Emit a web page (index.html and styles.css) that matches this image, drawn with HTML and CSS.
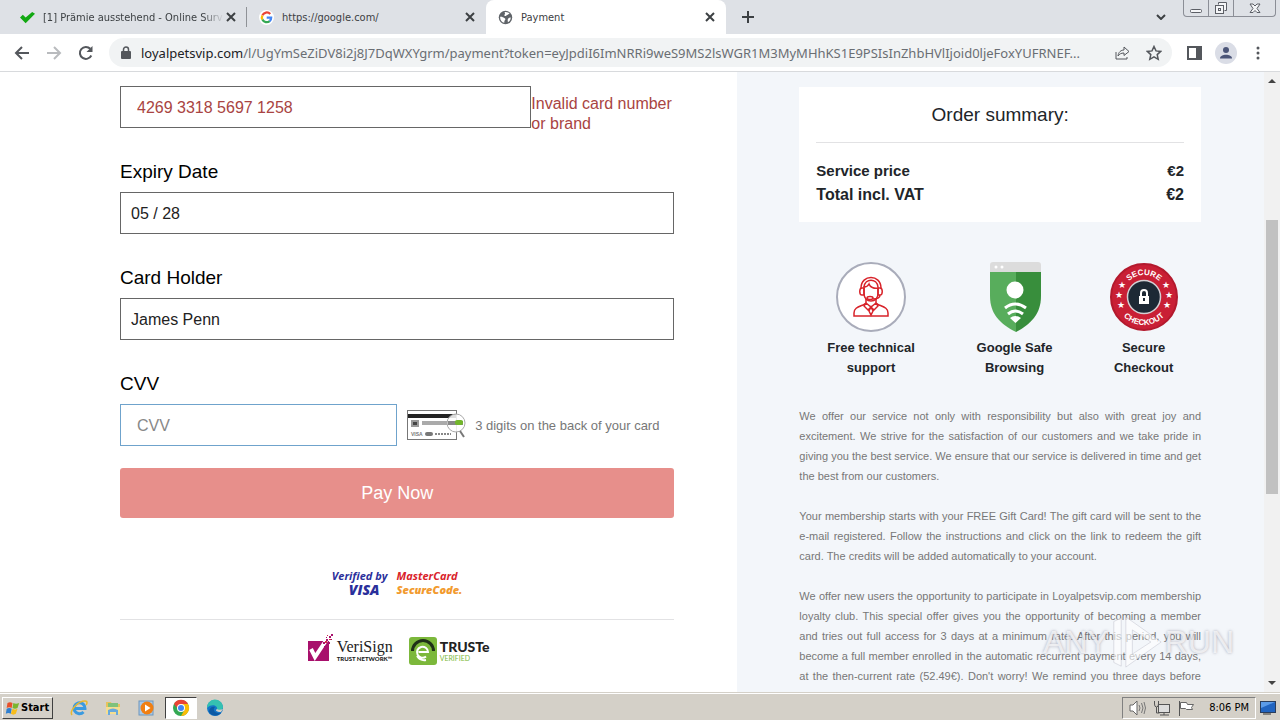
FILE: index.html
```html
<!DOCTYPE html>
<html lang="en">

<head>
    <meta charset="UTF-8">
    <meta name="viewport" content="width=device-width, initial-scale=1.0">
    <title>Payment</title>
    <link rel="stylesheet" href="styles.css">
</head>

<body>
    <!-- Tab strip -->
    <header class="tab-strip">
        <div class="tab first">
            <svg class="favicon" viewBox="0 0 16 16"><path d="M0 8l3-3 3 3 7-6 3 2-10 10z" fill="#12a812"/></svg>
            <span class="tab-title fade">[1] Prämie ausstehend - Online Surv</span>
            <button class="tab-close" aria-label="Close tab"><svg viewBox="0 0 10 10"><path d="M1 1l8 8M9 1L1 9"/></svg></button>
        </div>
        <div class="tab">
            <svg class="favicon" viewBox="0 0 16 16">
                <circle cx="8" cy="8" r="8" fill="#fff"/>
                <g fill="none" stroke-width="2.4">
                    <path d="M12 4.3A5 5 0 0 0 3.6 5.8" stroke="#ea4335"/>
                    <path d="M3.6 5.8a5 5 0 0 0 0 4.4" stroke="#fbbc05"/>
                    <path d="M3.6 10.2a5 5 0 0 0 7.8 1.6" stroke="#34a853"/>
                    <path d="M11.4 11.8A5 5 0 0 0 13 8H8.2" stroke="#4285f4"/>
                </g>
            </svg>
            <span class="tab-title">https://google.com/</span>
            <button class="tab-close" aria-label="Close tab"><svg viewBox="0 0 10 10"><path d="M1 1l8 8M9 1L1 9"/></svg></button>
        </div>
        <div class="tab active">
            <svg class="favicon" viewBox="0 0 16 16">
                <circle cx="8" cy="8" r="7.2" fill="#5f6368"/>
                <path d="M2.3 7.3c2.2-.3 3 .6 4.4 1.2 1.3.4 1.5 1.5.6 2.3-.8.6-.4 1.6-.6 2.8C4 13 2 10.500 2.300 7.300zM7 2.300c2-.6 4.300.2 5.500 1.700-1.400-.1-1.500 1.300-2.800 1.300-1 .2-.9 1.400-2 1.200-1.200-.3-1.300-1.400-.4-2C8 4 7 3 7 2.300zM13.500 8c.3 2.300-1.200 4.400-3 5.100.1-1.200-.4-2-.1-3C10.800 9 12 8 13.500 8z" fill="#fff"/>
            </svg>
            <span class="tab-title">Payment</span>
            <button class="tab-close" aria-label="Close tab"><svg viewBox="0 0 10 10"><path d="M1 1l8 8M9 1L1 9"/></svg></button>
        </div>
        <button class="new-tab" aria-label="New tab"><svg viewBox="0 0 12 12"><path d="M6 0v12M0 6h12"/></svg></button>
        <button class="tab-search" aria-label="Search tabs"><svg viewBox="0 0 10 6"><path d="M1 1l4 4 4-4"/></svg></button>
        <div class="window-controls">
            <button aria-label="Minimize"><svg viewBox="0 0 14 14"><rect x="1.500" y="8.500" width="11" height="3" rx="1"/></svg></button>
            <button aria-label="Restore"><svg viewBox="0 0 14 14"><path d="M4.500 3.500v-2h8v8h-2"/><rect x="1.500" y="4.500" width="8" height="8"/><rect x="4.500" y="7.500" width="2" height="2"/></svg></button>
            <button class="wide" aria-label="Close"><svg viewBox="0 0 14 14"><path d="M2 3h3l2 2 2-2h3L9 7.500l3 4H9l-2-2-2 2H2l3-4z"/></svg></button>
        </div>
    </header>

    <!-- Toolbar -->
    <nav class="toolbar">
        <button class="icon-btn" aria-label="Back"><svg viewBox="0 0 16 16"><path d="M15 8H2M8 2L2 8l6 6" class="line"/></svg></button>
        <button class="icon-btn dim" aria-label="Forward"><svg viewBox="0 0 16 16"><path d="M1 8h13M8 2l6 6-6 6" class="line"/></svg></button>
        <button class="icon-btn" aria-label="Reload"><svg viewBox="0 0 16 16"><path d="M13.300 10.500A6 6 0 1 1 12.300 3.800" class="line"/><path d="M14.500 1v6h-6z" fill="#54575c"/></svg></button>
        <div class="omnibox">
            <svg class="lock" viewBox="0 0 10 13"><path d="M2.500 5.500V3.500a2.500 2.500 0 0 1 5 0v2" fill="none" stroke="#54575c" stroke-width="1.500"/><rect y="5" width="10" height="8" rx="1" fill="#54575c"/></svg>
            <span class="url"><b>loyalpetsvip.com</b>/l/UgYmSeZiDV8i2j8J7DqWXYgrm/payment?token=eyJpdiI6ImNRRi9weS9MS2lsWGR1M3MyMHhKS1E9PSIsInZhbHVlIjoid0ljeFoxYUFRNEF...</span>
            <button class="icon-btn" aria-label="Share"><svg viewBox="0 0 16 16"><path d="M2 7v7h11v-2M4 11c.5-4 3-6 6-6V2l5 4.500-5 4V8c-3 0-4.500 1-6 3z" class="thin"/></svg></button>
            <button class="icon-btn" aria-label="Bookmark"><svg viewBox="0 0 16 16"><path d="M8 1.500l2 4.400 4.700.5-3.500 3.200 1 4.700L8 11.900l-4.200 2.400 1-4.700L1.300 6.400 6 5.900z" class="star"/></svg></button>
        </div>
        <button class="icon-btn" aria-label="Side panel"><svg viewBox="0 0 16 16"><path d="M2 2h13v12H2z" class="line"/><path d="M10 1h5v14h-5z" fill="#54575c"/></svg></button>
        <button class="icon-btn" aria-label="Profile"><svg class="avatar" viewBox="0 0 22 22"><circle cx="11" cy="11" r="11" fill="#dadde6"/><circle cx="11" cy="8" r="3" fill="#4b5578"/><path d="M5 16.500c0-5 12-5 12 0z" fill="#4b5578"/></svg></button>
        <button class="icon-btn" aria-label="Menu"><svg viewBox="0 0 16 16"><g fill="#54575c"><circle cx="8" cy="3" r="1.500"/><circle cx="8" cy="8" r="1.500"/><circle cx="8" cy="13" r="1.500"/></g></svg></button>
    </nav>

    <!-- Page -->
    <div class="viewport">
        <main class="payment">
            <form>
                <div class="field inline">
                    <input class="text-input padded invalid" id="card" type="text" value="4269 3318 5697 1258" aria-label="Card number">
                    <label class="error" for="card">Invalid card number or brand</label>
                </div>
                <div class="field">
                    <label for="expiry">Expiry Date</label>
                    <input class="text-input" id="expiry" type="text" value="05 / 28">
                </div>
                <div class="field">
                    <label for="holder">Card Holder</label>
                    <input class="text-input" id="holder" type="text" value="James Penn">
                </div>
                <div class="field">
                    <label for="cvv">CVV</label>
                    <div class="cvv-row">
                        <input class="text-input padded current" id="cvv" type="text" placeholder="CVV">
                        <svg class="card-back" viewBox="0 0 60 30">
                            <rect x=".5" y=".5" width="49" height="29" fill="#fff" stroke="#777"/>
                            <path d="M1 4h48v4H1z" fill="#222"/>
                            <rect x="4" y="10" width="8" height="7" fill="#999"/><rect x="6" y="12" width="4" height="3" fill="#444"/>
                            <path d="M15 11h32v4H15z" fill="#aaa"/>
                            <text x="4" y="26" class="card-mark">VISA</text>
                            <rect x="18" y="22" width="8" height="4" rx="2" fill="#777"/>
                            <path d="M28 24h16" stroke="#888" stroke-width="2" stroke-dasharray="2 1"/>
                            <circle cx="49" cy="13" r="9" fill="#fff" fill-opacity=".85" stroke="#aaa"/>
                            <rect x="41" y="11" width="15" height="4" fill="#888"/><rect x="48" y="10" width="8" height="5" rx="2" fill="#72b62b"/>
                            <path d="M53 21l4 6" stroke="#777" stroke-width="2"/>
                        </svg>
                        <span class="hint">3 digits on the back of your card</span>
                    </div>
                </div>
                <button class="pay-btn" type="submit">Pay Now</button>
            </form>

            <div class="logos cards">
                <div class="vbv">
                    <span>Verified by</span>
                    <strong>VISA</strong>
                </div>
                <div class="msc">
                    <span>MasterCard</span>
                    <strong>SecureCode.</strong>
                </div>
            </div>
            <hr>
            <div class="logos trust">
                <div class="seal">
                    <svg class="verisign-mark" viewBox="0 0 26 28">
                        <path d="M0 7h21v20H0z" fill="#a8106c"/>
                        <path d="M3 15l4 8L19 5" fill="none" stroke="#fff" stroke-width="4"/>
                        <path d="M15 8h2v2h-2zM18 5h2v2h-2zM20 8h2v2h-2zM21 2h2v2h-2zM23 0h2v2h-2zM16 12h2v2h-2zM18 3h1v1h-1zM23 5h1v1h-1z" fill="#a8106c"/>
                        <path d="M17 7h2v2h-2zM19 1h1v1h-1zM21 5h2v1h-2z" fill="#d42b45"/>
                    </svg>
                    <div class="verisign">
                        <span>VeriSign</span>
                        <small>TRUST NETWORK™</small>
                    </div>
                </div>
                <div class="seal">
                    <svg class="truste-mark" viewBox="0 0 28 28">
                        <rect width="28" height="28" rx="3" fill="#7cb83b"/>
                        <path d="M3.500 14a10.500 10.500 0 0 1 21 0" fill="none" stroke="#1f3018" stroke-width="3"/>
                        <path d="M9.500 15h9.500a5.500 5.500 0 1 0-2 4.500M17 23a9 9 0 0 1-9-4" fill="none" stroke="#fff" stroke-width="2"/>
                    </svg>
                    <div class="truste">
                        <strong>TRUSTe</strong>
                        <small>VERIFIED</small>
                    </div>
                </div>
            </div>
        </main>

        <aside class="summary">
            <section class="order-card">
                <h2>Order summary:</h2>
                <hr>
                <div class="price-row"><span>Service price</span><span>€2</span></div>
                <div class="price-row total"><span>Total incl. VAT</span><span>€2</span></div>
            </section>

            <div class="badges">
                <div class="badge">
                    <svg viewBox="0 0 70 70">
                        <circle cx="35" cy="35" r="34" fill="#fff" stroke="#a9acba" stroke-width="2"/>
                        <g fill="none" stroke="#d8232a" stroke-width="1.500">
                            <path d="M30 37v4l-3 2c-5 2-9 3-9 8v3h34v-3c0-5-4-6-9-8l-3-2v-4"/>
                            <path d="M30 41l5 4 5-4M30 41l-2 3 4 4 3-3M40 41l2 3-4 4-3-3M35 45l-2 4 2 4 2-4z"/>
                            <path d="M28 25v6c0 5 3 8 7 8s7-3 7-8v-5c-4 1-8-1-9-4-1 2-3 3-5 3z"/>
                            <path d="M25 26c0-14 20-14 20 0M28 25c1-9 13-9 14 0"/>
                            <path d="M28 26h-2c-3 0-3 7 0 7h2zM42 26h2c3 0 3 7 0 7h-2zM44 33c0 3-3 4-7 4"/>
                            <ellipse cx="34" cy="36" rx="3" ry="1.500"/>
                        </g>
                    </svg>
                    <span>Free technical<br>support</span>
                </div>
                <div class="badge">
                    <svg viewBox="0 0 70 70">
                        <path d="M10 10V3q0-3 3-3h45q3 0 3 3v7z" fill="#dcdcdc"/>
                        <circle cx="16" cy="5" r="1.500" fill="#fff"/><circle cx="22" cy="5" r="1.500" fill="#fff"/>
                        <path d="M10 10h26v60C20 62 10 52 10 34z" fill="#58ad5c"/>
                        <path d="M36 10h25v24c0 18-10 28-25 36z" fill="#388e3c"/>
                        <circle cx="35" cy="28" r="8.500" fill="#fff"/>
                        <path d="M25 46q10-8 21 0M28 52q7-6 15 0" fill="none" stroke="#fff" stroke-width="3"/>
                        <path d="M30 56q5-4 11 0l-5.500 5z" fill="#fff"/>
                    </svg>
                    <span>Google Safe<br>Browsing</span>
                </div>
                <div class="badge">
                    <svg viewBox="0 0 70 70">
                        <circle cx="35" cy="35" r="33" fill="#c91f35" stroke="#b3192d" stroke-width="2"/>
                        <circle cx="35" cy="35" r="16.500" fill="#1d2935" stroke="#d3cfd3" stroke-width="1.500"/>
                        <path id="arc-top" d="M13 35a22 22 0 0 1 44 0" fill="none"/>
                        <path id="arc-bottom" d="M7 35a28 28 0 0 0 56 0" fill="none"/>
                        <text class="seal-text"><textPath href="#arc-top" startOffset="50%">SECURE</textPath></text>
                        <text class="seal-text"><textPath href="#arc-bottom" startOffset="50%">CHECKOUT</textPath></text>
                        <g class="seal-star">
                            <text x="13" y="26">★</text><text x="10" y="36">★</text><text x="12" y="46">★</text>
                            <text x="57" y="26">★</text><text x="60" y="36">★</text><text x="58" y="46">★</text>
                        </g>
                        <path d="M32 34v-3a3 3 0 0 1 6 0v3" fill="none" stroke="#fff" stroke-width="2"/>
                        <rect x="30" y="34" width="10" height="8" fill="#fff"/>
                        <path d="M35 36v3" stroke="#1d2935" stroke-width="2"/>
                    </svg>
                    <span>Secure<br>Checkout</span>
                </div>
            </div>

            <div class="terms">
                <p>We offer our service not only with responsibility but also with great joy and excitement. We strive for the satisfaction of our customers and we take pride in giving you the best service. We ensure that our service is delivered in time and get the best from our customers.</p>
                <p>Your membership starts with your FREE Gift Card! The gift card will be sent to the e-mail registered. Follow the instructions and click on the link to redeem the gift card. The credits will be added automatically to your account.</p>
                <p class="cut">We offer new users the opportunity to participate in Loyalpetsvip.com membership loyalty club. This special offer gives you the opportunity of becoming a member and tries out full access for 3 days at a minimum rate. After this period, you will become a full member enrolled in the automatic recurrent payment every 14 days, at the then-current rate (52.49€). Don't worry! We remind you three days before</p>
            </div>
        </aside>

        <div class="scrollbar">
            <svg viewBox="0 0 8 4"><path d="M0 4l4-4 4 4z"/></svg>
            <div class="track">
                <div class="before"></div>
                <div class="thumb"></div>
                <div class="after"></div>
            </div>
            <svg viewBox="0 0 8 4"><path d="M0 0l4 4 4-4z"/></svg>
        </div>

        <div class="watermark">
            <span>ANY</span>
            <svg viewBox="0 0 56 60"><path d="M3 8v44l8 4V4zM16 3v54l38-27zM23 17l20 13-20 13z" fill-rule="evenodd"/></svg>
            <span>RUN</span>
        </div>
    </div>

    <!-- Taskbar -->
    <footer class="taskbar">
        <button class="start">
            <svg viewBox="0 0 18 16"><path d="M3 2q3-2 6 0L8 8Q5 6 2 8z" fill="#e8502a"/><path d="M10 2q3 2 7 0l-2 6q-3 2-6 0z" fill="#7bb52e"/><path d="M2 9q3-2 6 0l-1 6q-3-2-6 0z" fill="#2f7fd0"/><path d="M9 9q3 2 6 0l-2 6q-3 2-6 0z" fill="#f7bd1c"/></svg>
            Start
        </button>
        <div class="launchers">
            <button class="task" aria-label="Internet Explorer"><svg viewBox="0 0 18 18"><path d="M4 9.500h11A5.500 5.500 0 1 0 13.500 13" fill="none" stroke="#3a9ae0" stroke-width="3"/><path d="M2 16C-1 12 8 2 15 2c3 0 2 3 1 4" fill="none" stroke="#e8b830" stroke-width="1.500"/></svg></button>
            <button class="task" aria-label="Explorer"><svg viewBox="0 0 18 18"><path d="M2 3h5l1 2h8v10H2z" fill="#e7c35d"/><path d="M4 4h10v4H4z" fill="#7fc27b"/><path d="M2 8h14v7H2z" fill="#f5de90"/><path d="M4 16v-5q5-3 10 0v5h-2v-3H6v3z" fill="#68a9dc"/></svg></button>
            <button class="task" aria-label="Media Player"><svg viewBox="0 0 18 18"><rect x="1" y="2" width="14" height="14" fill="#a9c9e8" stroke="#6c96bd"/><circle cx="9" cy="9" r="6.500" fill="#f07f13"/><path d="M7 5.500v7l5.500-3.500z" fill="#fff"/></svg></button>
            <button class="task pressed" aria-label="Chrome"><svg viewBox="0 0 18 18"><circle cx="9" cy="9" r="8" fill="#34a853"/><path d="M2 5a8 8 0 0 1 14 0H9L6 10z" fill="#ea4335"/><path d="M9 5h7a8 8 0 0 1-7 12l4-7z" fill="#fbbc05"/><circle cx="9" cy="9" r="4" fill="#fff"/><circle cx="9" cy="9" r="3" fill="#4285f4"/></svg></button>
            <button class="task" aria-label="Edge"><svg viewBox="0 0 18 18"><circle cx="9" cy="9" r="8" fill="#1476c8"/><path d="M1 9a8 8 0 0 1 16-1c0 4-5 4-6 2 1-3-5-6-10-1z" fill="#35c1b1"/><path d="M9 8c-3 3 0 7 6 6-4 4-10 3-12-1 0-4 3-6 6-5z" fill="#0c59a4"/><path d="M11 10c-2 1-1 3 4 3l2-3c-2 1-5 1-6 0z" fill="#d4d0c8"/></svg></button>
        </div>
        <div class="tray">
            <svg viewBox="0 0 18 16"><path d="M1 5h3l4-4v14l-4-4H1z" fill="#fff" stroke="#666"/><path d="M10 5q2 3 0 6M12.500 3q3 5 0 10M15 2q3 6 0 12" fill="none" stroke="#777"/></svg>
            <svg viewBox="0 0 18 16"><rect x="5.500" y="4.500" width="11" height="8" fill="#ddd" stroke="#555"/><path d="M7 15h9M11 13v2M3.500 7v6h3M1.500 1v3q0 3 2 3t2-3V1" fill="none" stroke="#555"/></svg>
            <svg viewBox="0 0 18 16"><path d="M2.500 1v15" stroke="#555"/><path d="M3.500 2.500h6l1 2h6l-2 3 1 2h-6l-1-1h-5z" fill="#fff" stroke="#666"/></svg>
            <time>8:06 PM</time>
        </div>
        <svg class="desktop-icon" viewBox="0 0 16 14"><rect x=".5" y=".5" width="15" height="11" fill="#2164c0" stroke="#2a3d5c"/><path d="M1 1h14L1 7z" fill="#5b9be8"/><path d="M3 13h8" stroke="#333"/></svg>
    </footer>
</body>

</html>
```

FILE: styles.css
```css
* {
    box-sizing: border-box;
}

body {
    margin: 0;
    height: 100vh;
    display: flex;
    flex-direction: column;
    overflow: hidden;
    font-family: "Liberation Sans", Arial, sans-serif;
    color: #212529;
    background: #fff;
}

button {
    border: 0;
    padding: 0;
    background: none;
    font-family: inherit;
}

svg {
    display: block;
    flex: none;
}

hr {
    border: 0;
    border-top: 1px solid #e2e2e4;
    margin: 0;
}

/* Tab strip */
.tab-strip {
    display: flex;
    align-items: center;
    height: 34px;
    flex: none;
    background: #dee1e6;
    font-family: "DejaVu Sans Condensed", "Noto Sans", sans-serif;
    font-size: 11px;
    color: #3c4043;
}

.tab {
    display: flex;
    align-items: center;
    gap: 8px;
    width: 239px;
    height: 34px;
    padding: 0 11px 0 12px;
}

.tab.first {
    width: 247px;
    padding-left: 20px;
    padding-right: 10px;
    border-right: 1px solid #8f9297;
    border-image: linear-gradient(transparent 8px, #8f9297 8px, #8f9297 26px, transparent 26px) 1;
}

.tab.active {
    width: 240px;
    background: #fff;
    border-radius: 8px 8px 0 0;
}

.favicon {
    width: 15px;
    height: 15px;
}

.tab-title {
    flex: 1;
    overflow: hidden;
    white-space: nowrap;
}

.tab-title.fade {
    margin-right: -6px;
    mask-image: linear-gradient(to right, #000 88%, transparent);
}

.tab-close svg {
    width: 10px;
    height: 10px;
}

.tab-close path,
.new-tab path,
.tab-search path {
    fill: none;
    stroke: #3c4043;
    stroke-width: 2;
}

.new-tab {
    margin-left: 16px;
}

.new-tab svg {
    width: 12px;
    height: 12px;
}

.tab-search {
    margin-left: auto;
    margin-right: 17px;
}

.tab-search svg {
    width: 10px;
    height: 6px;
}

.window-controls {
    display: flex;
    align-self: flex-start;
    height: 17px;
    margin-right: 4px;
    border: 1px solid #8b8e96;
    border-top: 0;
    border-radius: 0 0 4px 4px;
}

.window-controls button {
    display: flex;
    justify-content: center;
    align-items: center;
    width: 25px;
    border-right: 1px solid #8b8e96;
}

.window-controls .wide {
    width: 41px;
    border-right: 0;
}

.window-controls svg {
    width: 14px;
    height: 14px;
    fill: #f4f5f7;
    stroke: #5c5f66;
}

/* Toolbar */
.toolbar {
    display: flex;
    align-items: center;
    height: 38px;
    flex: none;
    padding: 0 6px;
    background: #fff;
    border-bottom: 1px solid #d8dadd;
}

.icon-btn {
    display: flex;
    justify-content: center;
    align-items: center;
    width: 32px;
    height: 29px;
    flex: none;
}

.icon-btn svg {
    width: 16px;
    height: 16px;
}

.icon-btn .avatar {
    width: 22px;
    height: 22px;
}

.line {
    fill: none;
    stroke: #54575c;
    stroke-width: 2;
}

.dim .line {
    stroke: #b9bbbe;
}

.thin,
.star {
    fill: none;
    stroke: #54575c;
    stroke-width: 1;
}

.star {
    stroke-width: 1.5;
}

.omnibox {
    flex: 1;
    min-width: 0;
    display: flex;
    align-items: center;
    height: 29px;
    margin: 0 6px 0 7px;
    padding: 0 2px 0 12px;
    border-radius: 15px;
    background: #f1f3f4;
}

.lock {
    width: 10px;
    height: 13px;
    margin-right: 10px;
}

.url {
    flex: 1;
    min-width: 0;
    margin-right: 4px;
    overflow: hidden;
    text-overflow: ellipsis;
    white-space: nowrap;
    font-family: "Noto Sans", sans-serif;
    font-size: 13px;
    color: #6a6e73;
}

.url b {
    font-weight: normal;
    color: #202124;
}

/* Page */
.viewport {
    position: relative;
    flex: 1;
    min-height: 0;
    display: grid;
    grid-template-columns: minmax(0, 7fr) minmax(0, 5fr) 16px;
    grid-template-rows: 100%;
    overflow: hidden;
}

.payment {
    padding: 14px 63px 0 120px;
}

.field {
    margin-bottom: 32px;
}

.field label {
    display: block;
    margin-bottom: 8px;
    font-size: 19px;
    line-height: 24px;
    color: #000;
}

.field.inline {
    display: flex;
    height: 42px;
}

.field .error {
    flex: none;
    width: 143px;
    margin: 8px 0 0;
    font-size: 16px;
    line-height: 20px;
    color: #a94442;
}

.text-input {
    display: block;
    width: 100%;
    height: 42px;
    padding: 2px 10px 0;
    border: 1px solid #666;
    border-radius: 0;
    outline: 0;
    background: #fff;
    font-family: inherit;
    font-size: 16px;
    color: #222;
}

.text-input.padded {
    padding: 2px 16px 0;
}

.text-input.invalid {
    color: #a94442;
}

.text-input.current {
    width: 50%;
    border-color: #6fa3cc;
}

.text-input::placeholder {
    color: #888;
}

.cvv-row {
    display: flex;
    align-items: center;
    margin-bottom: -10px;
}

.card-back {
    width: 60px;
    height: 30px;
    margin: 0 8px 0 10px;
}

.card-mark {
    font-size: 5px;
    font-weight: bold;
    fill: #777;
}

.hint {
    font-size: 13px;
    color: #777;
    white-space: nowrap;
}

.pay-btn {
    display: block;
    width: 100%;
    height: 50px;
    border-radius: 3px;
    background: #e78f8b;
    font-size: 18px;
    color: #fff;
}

/* Security logos */
.logos {
    display: flex;
    justify-content: center;
}

.logos.cards {
    gap: 9px;
    margin: 50px 0 22px;
    font-family: "Open Sans", "Noto Sans", sans-serif;
    font-style: italic;
    font-weight: bold;
    font-size: 11px;
    line-height: 15px;
}

.vbv,
.msc,
.verisign,
.truste {
    display: flex;
    flex-direction: column;
}

.vbv {
    color: #2a2f9b;
}

.vbv strong {
    align-self: flex-end;
    margin-right: 8px;
    font-size: 14px;
    line-height: 14px;
}

.msc span {
    color: #d9222a;
}

.msc strong {
    line-height: 14px;
    color: #f29a2e;
}

.logos.trust {
    gap: 16px;
    margin-top: 14px;
    padding-left: 3px;
}

.seal {
    display: flex;
    gap: 3px;
}

.verisign-mark {
    width: 26px;
    height: 28px;
}

.verisign {
    padding-top: 5px;
    font-family: "Liberation Serif", serif;
    font-size: 16px;
    line-height: 16px;
    color: #222;
}

.verisign small {
    font-family: Lato, sans-serif;
    font-size: 6px;
    font-weight: 900;
    line-height: 8px;
}

.truste-mark {
    width: 28px;
    height: 28px;
    margin-top: 3px;
}

.truste {
    padding-top: 6px;
    font-family: Lato, sans-serif;
    color: #222;
}

.truste strong {
    font-size: 14px;
    font-weight: 900;
    line-height: 14px;
}

.truste small {
    font-size: 7px;
    line-height: 8px;
    color: #7cb83b;
}

/* Order summary */
.summary {
    padding: 15px 63px 0 62px;
    background: #f3f6fa;
}

.order-card {
    padding: 16px 17px 15px;
    background: #fff;
}

.order-card h2 {
    margin: 0 0 15px;
    font-size: 19px;
    font-weight: normal;
    line-height: 24px;
    text-align: center;
}

.order-card hr {
    margin-bottom: 16px;
}

.price-row {
    display: flex;
    justify-content: space-between;
    font-size: 15px;
    font-weight: bold;
    line-height: 24px;
}

.price-row.total {
    font-size: 16px;
}

.badges {
    display: grid;
    grid-template-columns: 5fr 5fr 4fr;
    margin: 40px 0 28px;
}

.badge {
    display: flex;
    flex-direction: column;
    align-items: center;
    gap: 6px;
    font-size: 13px;
    font-weight: bold;
    line-height: 20px;
    text-align: center;
}

.badge svg {
    width: 70px;
    height: 70px;
}

.seal-text {
    font-size: 8px;
    font-weight: bold;
    text-anchor: middle;
    fill: #fff;
}

.seal-star {
    font-family: "DejaVu Sans", sans-serif;
    font-size: 9px;
    text-anchor: middle;
    fill: #fff;
}

.terms {
    font-size: 11px;
    line-height: 20px;
    text-align: justify;
    color: #777;
}

.terms p {
    margin: 0 0 20px;
}

.terms .cut {
    text-align-last: justify;
}

/* Scrollbar */
.scrollbar {
    display: flex;
    flex-direction: column;
    align-items: center;
    padding: 7px 0;
    background: #f1f1f1;
}

.scrollbar svg {
    width: 8px;
    height: 4px;
    fill: #444;
}

.track {
    flex: 1;
    display: flex;
    flex-direction: column;
    width: 12px;
    margin: 5px 0;
}

.before {
    flex: 132;
}

.thumb {
    flex: 274;
    background: #c1c1c1;
}

.after {
    flex: 182;
}

/* Watermark over the page */
.watermark {
    position: absolute;
    right: 46px;
    bottom: 20px;
    display: flex;
    align-items: center;
    gap: 2px;
    font-size: 32px;
    line-height: 60px;
    color: rgba(255, 255, 255, 0.7);
    text-shadow: 0 0 3px rgba(120, 120, 140, 0.6);
    pointer-events: none;
}

.watermark svg {
    width: 52px;
    height: 60px;
    fill: rgba(255, 255, 255, 0.6);
    stroke: rgba(150, 150, 170, 0.3);
}

/* Taskbar */
.taskbar {
    display: flex;
    align-items: center;
    height: 28px;
    flex: none;
    padding: 2px 4px 0 2px;
    border-top: 1px solid #d4d0c8;
    box-shadow: inset 0 1px #fff;
    background: #d4d0c8;
    font-family: "DejaVu Sans Condensed", "Noto Sans", sans-serif;
    font-size: 11px;
    color: #000;
}

.start {
    display: flex;
    align-items: center;
    gap: 1px;
    height: 22px;
    padding: 0 3px 0 2px;
    border: 1px solid;
    border-color: #fff #404040 #404040 #fff;
    font-size: 11px;
    font-weight: bold;
}

.start svg {
    width: 15px;
    height: 14px;
}

.launchers {
    display: flex;
    gap: 2px;
    margin-left: 10px;
}

.task {
    display: flex;
    justify-content: center;
    align-items: center;
    width: 32px;
    height: 22px;
}

.task.pressed {
    border: 1px solid;
    border-color: #404040 #fff #fff #404040;
    background: #fff;
}

.task svg {
    width: 18px;
    height: 18px;
}

.tray {
    display: flex;
    align-items: center;
    gap: 6px;
    height: 22px;
    margin-left: auto;
    margin-right: 4px;
    padding: 0 6px;
    border: 1px solid;
    border-color: #808080 #fff #fff #808080;
}

.tray svg {
    width: 18px;
    height: 16px;
}

.tray time {
    margin-left: 8px;
}

.desktop-icon {
    width: 16px;
    height: 14px;
}
```
